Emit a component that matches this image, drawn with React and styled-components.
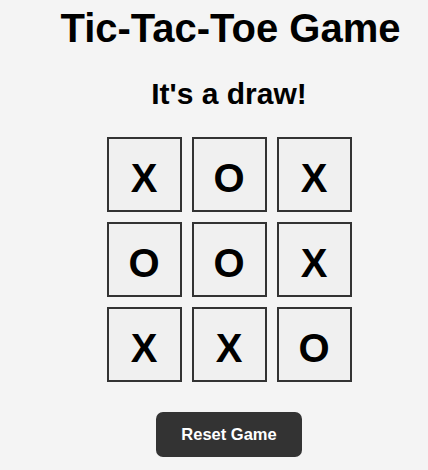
import React, { useState } from 'react';
import styled, { createGlobalStyle } from 'styled-components';

const GlobalStyle = createGlobalStyle`
  body {
    margin: 0;
    background: #f4f4f4;
    font-family: "Liberation Sans", Arial, sans-serif;
  }
`;

const initialBoard = ['X', 'O', 'X', 'O', 'O', 'X', 'X', 'X', 'O'];

const App = () => {
  const [board, setBoard] = useState(initialBoard);

  const resetGame = () => {
    setBoard(Array(9).fill(''));
  };

  const isDraw = board.every((cell) => cell !== '');

  return (
    <>
      <GlobalStyle />
      <Wrapper>
        <Title>Tic-Tac-Toe Game</Title>
        <Status>{isDraw ? "It's a draw!" : 'Next player: X'}</Status>
        <Board>
          {board.map((value, i) => (
            <Cell key={i}>{value}</Cell>
          ))}
        </Board>
        <ResetButton onClick={resetGame}>Reset Game</ResetButton>
      </Wrapper>
    </>
  );
};

export default App;

// Styled Components

const Wrapper = styled.div`
  display: flex;
  flex-direction: column;
  align-items: center;
  padding-left: 30px;
  padding-bottom: 14px;
`;

const Title = styled.h1`
  font-size: 40px;
  font-weight: bold;
  color: #000;
  margin: 6px 0 0;
  padding-left: 3px;
`;

const Status = styled.h2`
  font-size: 30px;
  font-weight: bold;
  color: #000;
  margin: 26px 0 26px;
`;

const Board = styled.div`
  display: grid;
  grid-template-columns: repeat(3, 75px);
  grid-auto-rows: 75px;
  gap: 10px;
  margin-bottom: 30px;
`;

const Cell = styled.div`
  box-sizing: border-box;
  display: flex;
  align-items: center;
  justify-content: center;
  padding-top: 7px;
  border: 2px solid #333;
  background: #f0f0f0;
  font-size: 40px;
  font-weight: bold;
  color: #000;
  cursor: pointer;
`;

const ResetButton = styled.button`
  padding: 13px 25px;
  font-family: "Liberation Sans", Arial, sans-serif;
  font-size: 16.5px;
  font-weight: bold;
  color: #fff;
  background: #333;
  border: none;
  border-radius: 7px;
  cursor: pointer;

  &:hover {
    background: #555;
  }
`;
